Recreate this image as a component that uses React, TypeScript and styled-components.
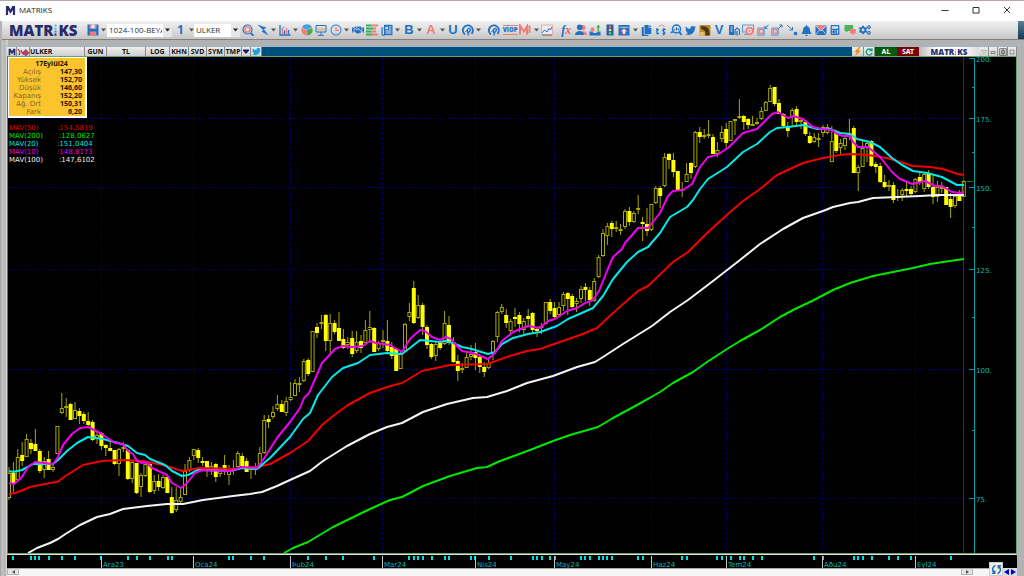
import React from "react";
import styled, { createGlobalStyle } from "styled-components";
import {
  FaHandshake,
  FaTwitter,
  FaBell,
  FaCalculator,
  FaCogs,
  FaCopy,
} from "react-icons/fa";

const BLUE = "#2272c4";
const RED = "#f07c7c";
const NAVY = "#2a2b6c";
const TEAL = "#00a0a0";
const TEAL_TEXT = "#00bcbc";

const GlobalStyle = createGlobalStyle`
  *, *::before, *::after { box-sizing: border-box; }
  body { margin: 0; background: #b4b4b4; font-family: "Open Sans", "Noto Sans", sans-serif; }
  button, select { font: inherit; color: inherit; margin: 0; padding: 0; border: 0; background: none; border-radius: 0; }
`;

/* ---------- chart data ---------- */

type Candle = [high: number, low: number, top: number, bottom: number, filled: 0 | 1];

const CANDLES: Candle[] = [
  [467, 500, 473, 498, 0], [462, 492, 473, 483, 1], [449, 482, 457, 480, 0], [442, 466, 455, 461, 1],
  [434, 457, 439, 457, 0], [439, 454, 443, 449, 1], [429, 451, 444, 451, 1], [449, 473, 451, 471, 1],
  [457, 478, 461, 470, 0], [451, 470, 459, 470, 1], [463, 472, 467, 470, 0], [426, 454, 426, 454, 0],
  [393, 414, 408, 413, 0], [398, 417, 406, 408, 0], [403, 420, 404, 420, 1], [402, 419, 410, 419, 0],
  [408, 424, 411, 416, 1], [412, 424, 414, 421, 1], [412, 427, 421, 425, 1], [420, 441, 422, 440, 1],
  [432, 444, 435, 439, 0], [432, 450, 433, 446, 1], [444, 456, 445, 448, 1], [442, 451, 448, 451, 1],
  [450, 465, 450, 464, 1], [448, 476, 449, 464, 0], [442, 452, 447, 449, 0], [449, 480, 450, 479, 1],
  [460, 483, 462, 479, 0], [463, 494, 463, 493, 1], [473, 497, 475, 487, 0], [462, 477, 464, 476, 0],
  [463, 493, 464, 492, 1], [475, 494, 481, 491, 0], [474, 491, 481, 487, 1], [475, 489, 477, 488, 0],
  [475, 493, 477, 493, 1], [487, 514, 497, 513, 1], [487, 512, 500, 510, 0], [488, 504, 497, 502, 0],
  [464, 495, 471, 495, 0], [457, 472, 460, 471, 0], [449, 460, 449, 456, 0], [448, 463, 450, 458, 1],
  [457, 466, 461, 463, 1], [461, 477, 461, 470, 1], [462, 475, 466, 470, 0], [463, 482, 464, 477, 1],
  [467, 477, 468, 474, 0], [455, 475, 465, 471, 1], [465, 485, 471, 475, 0], [460, 475, 468, 471, 0],
  [451, 467, 453, 467, 0], [453, 467, 456, 466, 1], [458, 472, 461, 472, 1], [466, 479, 468, 470, 0],
  [463, 475, 467, 470, 0], [447, 468, 453, 467, 0], [415, 454, 420, 453, 0], [415, 428, 419, 422, 1],
  [406, 419, 412, 417, 0], [395, 411, 404, 409, 0], [400, 412, 404, 412, 1], [397, 416, 401, 413, 0],
  [382, 401, 397, 400, 0], [379, 396, 383, 396, 0], [377, 392, 383, 385, 0], [359, 382, 361, 381, 0],
  [358, 376, 360, 374, 1], [331, 372, 331, 372, 0], [323, 338, 327, 333, 1], [315, 329, 322, 324, 0],
  [314, 351, 315, 341, 1], [314, 353, 323, 341, 0], [320, 334, 323, 332, 1], [312, 341, 328, 341, 1],
  [329, 349, 339, 348, 1], [337, 349, 342, 345, 0], [331, 357, 338, 354, 1], [331, 353, 342, 351, 0],
  [335, 353, 341, 348, 1], [320, 345, 330, 343, 0], [311, 343, 327, 330, 0], [327, 352, 328, 352, 1],
  [341, 351, 343, 349, 0], [330, 348, 340, 342, 0], [320, 352, 341, 351, 1], [342, 359, 347, 356, 1],
  [348, 371, 349, 371, 1], [352, 369, 354, 369, 0], [323, 351, 324, 351, 0], [303, 321, 312, 317, 0],
  [281, 324, 288, 323, 1], [295, 319, 305, 318, 0], [303, 335, 305, 327, 1], [325, 349, 327, 345, 1],
  [343, 359, 344, 357, 1], [342, 361, 344, 356, 0], [341, 350, 343, 348, 1], [311, 345, 323, 344, 0],
  [316, 345, 325, 343, 1], [337, 363, 342, 362, 1], [355, 381, 361, 371, 1], [363, 373, 368, 369, 0],
  [353, 368, 357, 368, 0], [345, 360, 354, 357, 0], [343, 370, 352, 358, 1], [354, 373, 357, 367, 1],
  [362, 377, 367, 372, 1], [358, 369, 363, 368, 0], [340, 360, 341, 354, 0], [311, 342, 312, 337, 0],
  [304, 314, 307, 312, 0], [309, 328, 315, 323, 1], [319, 334, 321, 331, 0], [308, 327, 317, 319, 1],
  [312, 332, 315, 324, 1], [318, 334, 321, 330, 0], [309, 327, 316, 319, 1], [312, 333, 313, 330, 1],
  [327, 337, 329, 331, 1], [323, 334, 326, 328, 0], [302, 324, 302, 324, 0], [299, 314, 302, 311, 1],
  [302, 318, 308, 317, 1], [302, 316, 307, 315, 0], [292, 311, 294, 306, 0], [292, 315, 293, 299, 1],
  [294, 308, 296, 307, 1], [298, 312, 301, 304, 0], [286, 303, 289, 299, 0], [283, 301, 287, 290, 1],
  [287, 306, 290, 300, 1], [278, 302, 281, 301, 0], [255, 278, 257, 277, 0], [229, 257, 233, 256, 0],
  [223, 245, 226, 236, 0], [221, 237, 223, 229, 1], [221, 232, 227, 229, 0], [224, 235, 229, 230, 0],
  [209, 229, 211, 227, 0], [207, 226, 211, 222, 1], [211, 223, 213, 222, 0], [195, 214, 208, 209, 0],
  [217, 241, 222, 224, 1], [208, 236, 224, 231, 1], [204, 231, 204, 230, 0], [186, 204, 188, 203, 0],
  [186, 208, 188, 196, 1], [153, 187, 157, 186, 0], [153, 169, 154, 160, 1], [153, 177, 160, 172, 1],
  [171, 190, 171, 190, 1], [182, 197, 189, 191, 0], [163, 182, 174, 182, 0], [162, 179, 163, 173, 1],
  [131, 168, 132, 167, 0], [127, 143, 132, 137, 1], [129, 139, 135, 137, 0], [120, 138, 134, 135, 0],
  [134, 154, 137, 154, 1], [142, 157, 150, 154, 0], [126, 142, 132, 139, 0], [123, 148, 129, 143, 1],
  [121, 141, 121, 141, 0], [119, 135, 119, 121, 0], [99, 119, 116, 118, 0], [115, 130, 116, 122, 1],
  [118, 129, 119, 125, 1], [116, 126, 124, 125, 0], [118, 125, 122, 124, 0], [107, 120, 111, 119, 0],
  [101, 111, 102, 111, 0], [85, 102, 88, 102, 0], [87, 106, 87, 104, 1], [99, 114, 103, 114, 1],
  [113, 127, 114, 126, 1], [122, 137, 126, 131, 1], [108, 127, 110, 117, 0], [106, 127, 109, 122, 1],
  [118, 129, 120, 122, 0], [120, 136, 122, 134, 1], [132, 144, 136, 143, 1], [133, 143, 137, 142, 0],
  [133, 147, 138, 139, 0], [125, 137, 127, 133, 0], [124, 134, 127, 133, 0], [126, 162, 141, 162, 0],
  [130, 153, 132, 151, 1], [139, 155, 143, 148, 0], [136, 150, 138, 146, 0], [119, 140, 133, 137, 0],
  [126, 173, 128, 173, 1], [165, 191, 167, 173, 0], [140, 167, 148, 167, 0], [141, 162, 143, 148, 0],
  [140, 167, 141, 166, 1], [162, 173, 164, 167, 1], [163, 183, 166, 182, 1], [175, 188, 182, 187, 1],
  [180, 191, 185, 186, 0], [182, 203, 185, 200, 1], [189, 201, 196, 197, 0], [188, 201, 190, 195, 0],
  [182, 196, 189, 191, 1], [186, 196, 189, 194, 1], [178, 193, 179, 192, 0], [172, 185, 177, 182, 1],
  [173, 192, 174, 189, 0], [170, 189, 173, 187, 1], [175, 204, 187, 197, 1], [181, 202, 187, 197, 0],
  [182, 193, 187, 188, 0], [187, 205, 187, 205, 1], [193, 218, 199, 207, 1], [194, 208, 196, 206, 0],
  [190, 201, 194, 201, 1], [180, 197, 181, 197, 0],
];

const AVERAGES = [
  {
    color: "#00e800",
    points:
      "284,553 293,548 308,542 333,527 370,509 390,500 402,497 423,486 450,476 477,468 487,467 500,461 530,450 553,441 570,435 598,427 613,418 637,405 660,392 673,383 693,372 707,362 727,349 740,341 760,330 780,317 795,309 812,301 833,290 850,283 873,276 893,272 913,268 930,264 950,261 964,259",
  },
  {
    color: "#f4f4f4",
    points:
      "28,553 37,548 50,543 58,539 67,533 80,525 97,517 110,514 123,509 147,506 167,504 183,504 203,500 233,496 250,494 262,492 277,486 290,480 310,471 323,461 347,446 370,434 387,427 402,423 423,412 447,404 473,398 487,397 507,391 527,383 553,376 577,367 595,362 603,357 623,344 652,326 670,312 688,300 713,281 740,260 760,244 783,229 803,218 823,211 833,207 850,203 858,202 873,198 897,197 920,196 937,195 964,195",
  },
  {
    color: "#f00000",
    points:
      "9,494 15,493 23,490 30,487 50,483 57,482 67,475 83,465 102,461 123,460 143,461 163,465 182,471 200,468 233,469 257,467 270,464 290,453 308,441 323,424 337,413 348,405 370,393 387,387 402,383 422,371 450,365 487,364 510,356 527,351 540,349 557,343 580,335 597,328 613,313 638,291 648,286 673,262 688,252 707,233 728,214 743,201 760,189 777,175 790,169 803,163 823,158 840,155 850,154 868,155 887,158 897,161 913,166 930,167 943,169 958,174 964,175",
  },
  {
    color: "#00eaea",
    points:
      "9,471 13,472 22,470 33,464 53,464 58,460 67,451 77,443 88,437 103,439 118,443 128,446 137,453 145,455 150,459 165,465 172,471 182,476 188,475 198,470 230,471 242,468 257,469 270,458 290,437 303,419 310,413 318,395 332,377 343,368 358,363 370,355 387,353 402,354 410,348 420,340 440,342 445,341 453,343 462,347 472,349 478,351 488,354 495,352 502,344 513,338 528,334 540,332 557,326 568,319 593,308 603,296 613,279 627,262 638,252 648,247 660,233 670,217 687,207 693,200 700,189 708,179 727,167 743,152 757,144 770,132 777,128 788,127 803,125 817,129 830,129 840,133 850,134 857,139 870,142 880,147 892,158 902,165 913,171 927,173 942,177 957,185 964,185",
  },
  {
    color: "#f000f0",
    points:
      "9,483 14,484 22,477 28,467 35,462 53,464 58,457 63,445 72,434 80,428 88,427 100,433 115,443 123,444 128,451 133,454 137,461 142,463 146,462 152,468 167,475 172,483 181,488 187,483 195,473 202,470 230,471 242,467 257,468 263,460 277,438 290,422 300,408 304,398 309,393 322,363 335,349 343,346 352,347 363,346 370,341 376,343 390,345 402,352 410,339 420,330 425,331 432,337 440,340 446,337 451,339 455,344 462,351 473,353 488,359 495,353 502,341 513,332 528,326 540,328 548,321 555,319 567,311 577,308 585,303 593,300 599,291 607,271 613,257 622,249 625,243 638,228 648,228 660,213 668,196 673,191 683,190 692,184 700,167 708,157 717,155 728,148 743,133 757,129 772,114 778,112 788,118 793,116 803,119 813,127 822,129 832,130 837,134 843,136 850,136 853,142 858,147 868,147 880,157 892,172 900,179 912,184 925,181 935,186 942,186 952,192 960,193 964,192",
  },
];

const PRICES = [
  { y: 59, label: "200." }, { y: 119, label: "175." }, { y: 188, label: "150." },
  { y: 270, label: "125." }, { y: 370, label: "100." }, { y: 499, label: "75." },
];
const MINOR_PRICES = [87, 152, 227, 317, 430];

const MONTHS = [
  { x: 102, label: "Ara23" }, { x: 194, label: "Oca24" }, { x: 291, label: "Þub24" },
  { x: 383, label: "Mar24" }, { x: 476, label: "Nis24" }, { x: 555, label: "May24" },
  { x: 652, label: "Haz24" }, { x: 727, label: "Tem24" }, { x: 823, label: "Aðu24" },
  { x: 916, label: "Eyl24" },
];

const TICKS = [
  13, 31, 35, 39, 49, 62, 75, 101, 128, 137, 150, 168, 172, 229, 233, 251, 264, 308, 326, 343, 374,
  409, 414, 418, 423, 432, 445, 449, 471, 475, 489, 511, 533, 537, 542, 550, 555, 581, 585, 590, 599,
  603, 607, 612, 638, 643, 682, 687, 717, 722, 731, 740, 744, 753, 762, 814, 823, 854, 858, 863, 872,
  889, 898, 911, 951,
];

/* ---------- page frame ---------- */

const Window = styled.div`
  display: flex;
  flex-direction: column;
  min-height: 100vh;
  border-top: 1px solid #b5a8a6;
  overflow: hidden;
`;

const TitleBar = styled.header`
  display: flex;
  align-items: center;
  height: 20px;
  padding: 0 12px 2px 5px;
  gap: 3px;
  background: #fff;
  color: #222;
`;

const WindowTitle = styled.h1`
  flex: 1;
  margin: 0;
  font-size: 8px;
  line-height: 12px;
  font-weight: 400;
`;

const WindowButton = styled.button`
  display: grid;
  place-items: center;
  width: 11px;
  height: 16px;
  margin-left: 17px;
`;

const Toolbar = styled.div`
  display: flex;
  align-items: stretch;
  height: 19px;
  margin-left: 2px;
  background: linear-gradient(#f1f1f1, #d4d4d4 70%, #c6c6c6);
  border-bottom: 1px solid #808080;
`;

const ToolbarBody = styled.div`
  display: flex;
  flex: 1;
  align-items: center;
  padding-left: 7px;
`;

const ToolbarEnd = styled.div`
  width: 6px;
  background: linear-gradient(#5c7f99, #173a53);
`;

const Brand = styled.div<{ $small?: boolean }>`
  display: flex;
  align-items: center;
  width: ${(p) => (p.$small ? "60px" : "78px")};
  height: ${(p) => (p.$small ? "9px" : "18px")};
  justify-content: ${(p) => (p.$small ? "center" : "flex-start")};
  background: ${(p) => (p.$small ? "linear-gradient(90deg, #bbb, #fff 30%, #fff 70%, #ddd)" : "none")};
  color: ${NAVY};
  font-size: ${(p) => (p.$small ? "8px" : "15px")};
  line-height: 1;
  font-weight: 800;
`;

const Tool = styled.button<{ $wide?: boolean }>`
  display: grid;
  place-items: center;
  flex: none;
  width: ${(p) => (p.$wide ? "14px" : "12px")};
  height: 14px;
  color: ${BLUE};
`;

const CaretButton = styled.button`
  display: grid;
  place-items: center;
  flex: none;
  width: 5px;
  height: 12px;
  color: #555;
`;

const Spacer = styled.span`
  width: 2px;
`;

const LetterTool = styled(Tool)<{ $tone: string }>`
  color: ${(p) => p.$tone};
  font-family: "Liberation Sans", sans-serif;
  font-size: 13px;
  line-height: 14px;
  font-weight: 700;
`;

const FormulaTool = styled(LetterTool)`
  display: flex;
  align-items: center;
  justify-content: center;
  font-family: "Liberation Serif", serif;
  font-style: italic;
  font-size: 12px;
  span { color: #d66; }
`;

const TinyTool = styled(Tool)`
  font-size: 6px;
  line-height: 8px;
  font-weight: 800;
  span { border-top: 1px solid ${RED}; border-bottom: 1px solid ${RED}; }
`;

const SaveTools = styled.div`
  display: flex;
  align-items: center;
  gap: 2px;
  width: 20px;
`;

const Picker = styled.label<{ $width: number }>`
  position: relative;
  display: flex;
  width: ${(p) => p.$width}px;
  height: 13px;
  background: #fff;
  color: #333;
  font-size: 8px;
  select {
    appearance: none;
    width: 100%;
    height: 12px;
    padding: 0 10px 0 2px;
    line-height: 12px;
    outline: none;
  }
`;

const PickerArrow = styled.span`
  position: absolute;
  right: 0;
  top: 0;
  display: grid;
  place-items: center;
  width: 9px;
  height: 13px;
  background: #e6e6e6;
  pointer-events: none;
`;

const PageTool = styled(LetterTool)`
  width: 17px;
  font-family: "Open Sans", sans-serif;
  font-size: 12px;
`;

const ToolStrip = styled.div`
  display: flex;
  flex: 0 1 629px;
  align-items: center;
  justify-content: space-between;
  margin-left: 2px;
`;

/* ---------- chart panel ---------- */

const Workspace = styled.main`
  display: flex;
  flex: 1;
  padding: 6px 7px 0 7px;
  background: linear-gradient(90deg, #9a9a9a, #c6c6c6 2px, #b2b2b2 5px, #dcdcdc 7px, #b2b2b2 8px);
`;

const Panel = styled.section`
  flex: 1;
  min-width: 0;
  display: flex;
  flex-direction: column;
`;

const PanelHeader = styled.div`
  display: flex;
  align-items: center;
  height: 10px;
  background: #00507e;
  border-top: 1px solid #9db6c6;
`;

const HeaderCell = styled.button<{ $width: number; $align?: string }>`
  display: flex;
  align-items: center;
  justify-content: ${(p) => p.$align ?? "center"};
  width: ${(p) => p.$width}px;
  height: 9px;
  background: linear-gradient(#eee, #cfcfcf);
  border-right: 1px solid #8a8a8a;
  color: #151515;
  font-family: "Noto Sans", sans-serif;
  font-size: 7px;
  line-height: 9px;
  font-weight: 700;
`;

const HeaderFill = styled.div`
  flex: 1;
`;

const TradeButton = styled(HeaderCell)<{ $tone: string }>`
  background: ${(p) => p.$tone};
  border: 0;
  color: #fff;
`;

const ChartArea = styled.div`
  position: relative;
  background: #000;
  border: 1px solid #67a567;
  border-left-color: #3c8f3c;
  svg { display: block; width: 100%; height: auto; }
`;

const TimeAxis = styled.div`
  background: #000;
  border-top: 1px solid #d6ded6;
  border-bottom: 1px solid #aaa;
  svg { display: block; width: 100%; height: auto; }
`;

const DataBox = styled.div`
  position: absolute;
  left: 0;
  top: 0;
  width: 79px;
  padding: 1px 3px 0 4px;
  background: #fcc42c;
  border: 1px solid #fff;
  border-bottom-width: 2px;
  border-right-width: 2px;
  color: #1c1400;
  font: 700 7px/8px "Noto Sans", sans-serif;
  table { width: 100%; border-collapse: collapse; }
  caption { padding: 1px 0 0 8px; }
  td, th { padding: 0; height: 8px; line-height: 8px; text-align: right; }
  th { width: 28px; color: #806520; font: 400 7px/8px "DejaVu Sans", sans-serif; }
`;

const Legend = styled.dl`
  position: absolute;
  left: 1px;
  top: 67px;
  margin: 0;
  font: 400 7px/8px "DejaVu Sans", sans-serif;
`;

const LegendRow = styled.div<{ $tone: string; $wide?: boolean }>`
  display: grid;
  grid-template-columns: ${(p) => (p.$wide ? "50px" : "48px")} auto;
  color: ${(p) => p.$tone};
  dd { margin: 0; }
`;

const ScrollRow = styled.div`
  position: relative;
  display: flex;
  align-items: stretch;
  justify-content: space-between;
  height: 7px;
  background: #f6f6f6;
`;

const ScrollButton = styled.button`
  display: grid;
  place-items: center;
  width: 12px;
  height: 6px;
  background: #e6e6e6;
  border: 1px solid #b5b5b5;
  border-top-color: #ddd;
`;

const ScrollTail = styled.div`
  display: flex;
  width: 56px;
  background: #f6f6f6;
`;

const PageControls = styled.div`
  position: absolute;
  right: 0;
  bottom: 0;
  display: flex;
  align-items: flex-end;
`;

const RefreshButton = styled.button`
  display: grid;
  place-items: center;
  width: 14px;
  height: 14px;
  background: #eee;
  border: 1px solid #ccc;
`;

const StepButton = styled.button`
  display: grid;
  place-items: center;
  width: 7px;
  height: 8px;
  background: #ddd;
`;

/* ---------- icons ---------- */

const Svg = ({ children, size = 12, box = "0 0 12 12" }: { children: React.ReactNode; size?: number; box?: string }) => (
  <svg width={size} height={size} viewBox={box} fill="none" aria-hidden="true">{children}</svg>
);

const Caret = ({ label }: { label: string }) => (
  <CaretButton aria-label={label}>
    <svg width="5" height="4" viewBox="0 0 5 4"><path d="M0 0.5h5L2.5 3.5z" fill="currentColor" /></svg>
  </CaretButton>
);

const DownMark = () => (
  <svg width="5" height="4" viewBox="0 0 5 4"><path d="M0 0.5h5L2.5 3.5z" fill="#222" /></svg>
);

const MLogo = ({ size, tone = NAVY }: { size: number; tone?: string }) => (
  <Svg size={size}><path d="M1 11V1h3l2 4 2-4h3v10H8.6V5.5L6 9.5 3.4 5.500V11z" fill={tone} /></Svg>
);

const Logo = ({ small }: { small?: boolean }) => (
  <Brand $small={small} role="img" aria-label="MATRIKS">
    <span>MATR</span>
    <svg width={small ? 3 : 5} height={small ? 6 : 12} viewBox="0 0 5 12" aria-hidden="true">
      <path d="M1.500 .5h2v2h-2z" fill="#55b8e8" />
      <path d="M1.500 3.800h2v1.800h-2z" fill="#55b8e8" />
      <path d="M1.500 6.700h2v1.800h-2z" fill="#2f7fc0" />
      <path d="M1.500 9.500h2v2.200h-2z" fill={NAVY} />
    </svg>
    <span>KS</span>
  </Brand>
);

const Magnifier = () => (
  <Svg>
    <circle cx="5.500" cy="5.500" r="4.500" stroke={BLUE} strokeWidth="1.200" />
    <circle cx="5.500" cy="5.500" r="2.600" stroke={RED} strokeWidth="1.400" />
    <path d="M8.800 9l2.700 2.700" stroke={BLUE} strokeWidth="1.800" />
  </Svg>
);

const SymbolSearch = () => (
  <Svg>
    <circle cx="6.500" cy="5" r="4" stroke={BLUE} strokeWidth="1.500" />
    <path d="M4.800 6.500V4.800M6.500 6.500V3M8.200 6.500V4" stroke={BLUE} />
    <path d="M9.300 8l2.200 3" stroke={BLUE} strokeWidth="2" />
    <path d="M.5 8.500L3.500 8" stroke={BLUE} strokeWidth="1.300" />
  </Svg>
);

const Bolt = ({ tone = BLUE }: { tone?: string }) => (
  <Svg>
    <path d="M1 1l8 2.800-2.300 1.500L11 11 4.800 7.400l1.800-1.200z" fill={tone} stroke={tone} strokeWidth="0.400" />
  </Svg>
);

const BarChart = () => (
  <Svg>
    <path d="M1 1v10h10.500" stroke={BLUE} strokeWidth="1.300" />
    <path d="M3.500 10V5M7.500 10V4" stroke={RED} strokeWidth="1.300" />
    <path d="M5.500 10V6.500M9.500 10V6" stroke={BLUE} strokeWidth="1.300" />
    <path d="M2.500 5l3-2" stroke={BLUE} strokeWidth="0.700" />
  </Svg>
);

const Pie = () => (
  <Svg>
    <path d="M6 6L1 3.500A5.500 5.500 0 0 1 11 3.500z" fill="#4a9fe0" />
    <path d="M6 6.300L11.200 4A5.500 5.500 0 0 1 6.300 11.600z" fill="#3fae49" />
    <path d="M5.700 6.300V11.600A5.500 5.500 0 0 1 .8 4z" fill={RED} />
  </Svg>
);

const Board = () => (
  <Svg>
    <path d="M1 1.500h10v6.500H1zM3 11.300h6M6 8v3" stroke={BLUE} />
    <path d="M3 6.500v-3M5 6.500v-2.500M7 6.500v-3M9 6.500v-2.500" stroke="#f0a040" />
  </Svg>
);

const Clock = () => (
  <Svg>
    <circle cx="6" cy="6" r="5" stroke="#5b9bd8" strokeWidth="1.300" />
    <path d="M6 3v3.300h3" stroke={RED} strokeWidth="1.200" />
  </Svg>
);

const DepthBars = () => (
  <Svg>
    <path d="M0 1.500h5M0 4.500h7M0 7.500h5M0 10.500h6" stroke="#35ad5b" strokeWidth="2" />
    <path d="M5 1.500h7M7 4.500h3M5 7.500h5M6 10.500h6" stroke={RED} strokeWidth="2" />
  </Svg>
);

const Newspaper = () => (
  <Svg>
    <path d="M3 .8h8.500v10.400H3z" fill={BLUE} />
    <path d="M2.500 4H1v6.500l.7.700h2" stroke={BLUE} strokeWidth="1.200" />
    <path d="M4.500 2.800h2.500v2.400H4.500z" fill="#e6e6e6" />
    <path d="M8 3h2.300M8 5h2.300M4.500 7h5.800M4.500 9h5.800" stroke="#e6e6e6" />
  </Svg>
);

const Horse = () => (
  <Svg>
    <path d="M3 10.500A5 5 0 1 1 9.500 9.800" stroke={BLUE} strokeWidth="1.800" />
    <path d="M6 11.500C7 9 4.500 8 5.500 5.500 6.200 3.800 8 4 8.500 5.500L8 7c-1 0-1.500 1-1 2.500" stroke={BLUE} strokeWidth="1.300" />
    <path d="M3.500 8L5 6" stroke={BLUE} />
  </Svg>
);

const RedM = () => (
  <Svg><path d="M1 10.500V1.500L5 7.500l3-5V10.500M10.500 9V1.500" stroke={RED} strokeWidth="2" /></Svg>
);

const LineChartIcon = () => (
  <Svg>
    <path d="M.5 1h11v10H.5z" fill="#ececec" stroke="#f3a6a6" />
    <path d="M1 9l2.500-3L6 8l2-3.500L9.500 6 11 3" stroke={BLUE} />
    <path d="M1 11h10" stroke="#666" />
  </Svg>
);

const Users = () => (
  <Svg>
    <circle cx="8" cy="3.500" r="2.500" fill={RED} /><path d="M4.500 11c0-5 7.500-5 7.500 0z" fill={RED} />
    <circle cx="4.700" cy="3.300" r="2.800" fill={BLUE} /><path d="M0 11c0-5.500 9-5.500 9 0z" fill={BLUE} />
  </Svg>
);

const Inbox = () => (
  <Svg>
    <path d="M.5 7.500h3l1 1.500h3l1-1.500h3v4H.5z" fill={BLUE} />
    <path d="M2 3.500h3v2h1.500L3.800 8 1 5.500h1z" fill={RED} />
    <path d="M8.500 7V3.500H7L9.300 .5 11.600 3.500H10V7z" fill="#49b35c" />
  </Svg>
);

const TrafficLight = () => (
  <Svg>
    <rect x="2.500" y=".5" width="7" height="11" fill="#255f9e" />
    <circle cx="6" cy="2.700" r="1.300" fill="#ff6257" />
    <circle cx="6" cy="6" r="1.300" fill="#ffe34d" />
    <circle cx="6" cy="9.300" r="1.300" fill="#53d668" />
  </Svg>
);

const UploadWindow = () => (
  <Svg>
    <rect x=".5" y="1" width="11" height="10.500" fill={BLUE} />
    <path d="M1.500 3.300h9" stroke="#dfeaf5" strokeWidth="0.800" />
    <path d="M6 4.500L9 7.500H7.300V10H4.700V7.500H3z" fill="#fff" stroke={RED} strokeWidth="0.800" />
  </Svg>
);

const Exchange = () => (
  <Svg>
    <path d="M2 4V9.500h2M1 5.800h3" stroke={BLUE} strokeWidth="1.300" />
    <path d="M10.800 5.500C8.500 4.500 6.500 6 8.500 7.500S11 10 7 9.800M8.800 4v7.500" stroke={BLUE} strokeWidth="1.100" />
    <path d="M4 2.500C6 .5 8.500 1 9.500 3" stroke={RED} />
  </Svg>
);

const DepositIcon = () => (
  <Svg>
    <rect x=".5" y="1" width="11" height="10.500" fill="#b98a32" />
    <path d="M2 2.500C9 1.500 11 6 10.500 11.500H6C7.500 8 5.500 5.500 2 5z" fill="#4a3610" />
    <path d="M.5 8h5v3.500h-5z" fill="#e4bc62" />
  </Svg>
);

const Tower = () => (
  <Svg>
    <path d="M1 11V1h5v10z" fill={BLUE} /><path d="M2.500 3h2M2.500 5h2M2.500 7h2" stroke="#fff" strokeWidth=".8" />
    <path d="M7 11V6l2-2 2.500 2v5" stroke={BLUE} strokeWidth="1.200" /><path d="M9 7v4.500" stroke={BLUE} strokeWidth="1.300" />
  </Svg>
);

const ScreenTarget = () => (
  <Svg>
    <path d="M.5 1h11v7H.5zM2 10.500h4" stroke="#5b9bd8" strokeWidth="1.100" />
    <circle cx="7.500" cy="7" r="3.300" fill="#dedede" stroke={RED} strokeWidth="1.700" />
    <circle cx="7.500" cy="7" r="1" fill={RED} />
  </Svg>
);

const BoxArrow = ({ out }: { out?: boolean }) => (
  <Svg>
    <path d="M.8 4h6.500v7.200H.8z" stroke="#5b9bd8" />
    <path d="M2.300 5.500h4v4h-4z" stroke={RED} strokeWidth="1.300" />
    <path d={out ? "M7.500 4.500L11 1M8.500 1H11v2.500" : "M11.500 .8L8 4.300M8 1.800v2.500h2.500"} stroke={BLUE} />
  </Svg>
);

const Trend = () => (
  <Svg>
    <path d="M1 1l5.500 5M6.500 3v3H3.500" stroke={BLUE} strokeWidth=".9" />
    <circle cx="9.500" cy="9.500" r="1.800" fill={BLUE} />
  </Svg>
);

const Mail = () => (
  <Svg>
    <path d="M.5 1.500h11v9.500H.5z" fill={BLUE} /><path d="M.5 1.500h11L6 7z" fill={RED} />
    <path d="M.5 1.500L6 7l5.500-5.500M.5 11l4-5M11.500 11l-4-5" stroke="#eee" strokeWidth=".7" />
  </Svg>
);

const Chat = () => (
  <Svg>
    <path d="M.5 1h8.500v6H4L2 8.500V7H.5z" fill="#45b65a" />
    <path d="M6 5h5.700v4.500h-1.500L9 11.500 8 9.500H6z" fill={RED} />
  </Svg>
);

const Floppy = () => (
  <Svg>
    <path d="M.5 .5h11v11H.5z" fill={BLUE} /><path d="M2.800 .5h6.400v4H2.800z" fill="#e9e9e9" />
    <path d="M3.500 .5v3.500M8.500 .5v3.500" stroke={RED} strokeWidth="1.600" /><path d="M2.800 7.500h6.400v4H2.800z" fill={RED} />
  </Svg>
);

/* ---------- chart ---------- */

const candleX = (index: number) => 9 + index * 4.4;

const PriceChart = () => (
  <svg viewBox="8 57 1008 496" role="img" aria-label="ULKER daily candles with moving averages">
    <g stroke="#000064" strokeDasharray="3 2">
      {MONTHS.map((m) => <path key={m.x} d={`M${m.x - 0.5} 57V553`} />)}
      {PRICES.map((p) => <path key={p.y} d={`M8 ${p.y - 0.5}H969`} />)}
    </g>
    <path d="M963.500 57V553" stroke="#780078" />
    {CANDLES.map(([high, low, top, bottom, filled], i) => {
      const x = candleX(i);
      return filled ? (
        <g key={i}>
          <path d={`M${x} ${high}V${low}`} stroke="#a8a800" />
          <rect x={x - 2} y={top} width="4" height={Math.max(2, bottom - top)} fill="#ffff00" />
        </g>
      ) : (
        <g key={i} stroke="#a8a800" fill="none">
          <path d={`M${x} ${high}V${top}M${x} ${bottom}V${low}`} />
          <rect x={x - 1.5} y={top + 0.5} width="3" height={Math.max(1, bottom - top - 1)} />
        </g>
      );
    })}
    {AVERAGES.map((line) => (
      <polyline key={line.color} points={line.points} fill="none" stroke={line.color} strokeWidth="2" strokeLinejoin="round" />
    ))}
    <path d="M965 181.500H973" stroke="#008000" />
    <path d="M974.500 58V553" stroke={TEAL} />
    {PRICES.map((p) => (
      <g key={p.y}>
        <path d={`M969 ${p.y - 0.5}H974`} stroke={TEAL} />
        <text x="976" y={p.y + 3} fill={TEAL_TEXT} fontFamily="DejaVu Sans, sans-serif" fontSize="7">{p.label}</text>
      </g>
    ))}
    {MINOR_PRICES.map((y) => <path key={y} d={`M972 ${y + 0.5}H974`} stroke={TEAL} />)}
  </svg>
);

const Months = () => (
  <svg viewBox="7 555 1010 13" role="img" aria-label="Months">
    {TICKS.map((x) => <rect key={x} x={x - 1} y="556" width="2" height="4" fill="#00e0e0" />)}
    {MONTHS.map((m) => (
      <g key={m.x}>
        <path d={`M${m.x - 0.5} 556V568`} stroke="#c8c8c8" />
        <text x={m.x + 1} y="567" fill={TEAL_TEXT} fontFamily="DejaVu Sans, sans-serif" fontSize="7">{m.label}</text>
      </g>
    ))}
  </svg>
);

const QUOTE = [
  ["Açılış", "147,30"], ["Yüksek", "152,70"], ["Düşük", "146,60"],
  ["Kapanış", "152,20"], ["Ağ. Ort", "150,31"], ["Fark", "6,20"],
];

const LEGEND = [
  { name: "MAV(50)", value: ":154,5819", tone: "#e00000" },
  { name: "MAV(200)", value: ":128,0627", tone: "#00e000", wide: true },
  { name: "MAV(20)", value: ":151,0404", tone: "#00e0e0" },
  { name: "MAV(10)", value: ":148,8173", tone: "#e000e0" },
  { name: "MAV(100)", value: ":147,6102", tone: "#f0f0f0", wide: true },
];

export default function App() {
  return (
    <>
      <GlobalStyle />
      <Window>
        <TitleBar>
          <MLogo size={11} />
          <WindowTitle>MATRIKS</WindowTitle>
          <WindowButton aria-label="Minimize">
            <svg width="8" height="8" viewBox="0 0 8 8"><path d="M0.500 4.500h7" stroke="#333" /></svg>
          </WindowButton>
          <WindowButton aria-label="Maximize">
            <svg width="8" height="8" viewBox="0 0 8 8"><path d="M1 1.500h6v5.500H1z" fill="none" stroke="#333" /></svg>
          </WindowButton>
          <WindowButton aria-label="Close">
            <svg width="8" height="8" viewBox="0 0 8 8"><path d="M1 1l6 6M7 1L1 7" stroke="#333" /></svg>
          </WindowButton>
        </TitleBar>

        <Toolbar>
          <ToolbarBody>
            <Logo />
            <SaveTools>
              <Tool aria-label="Save"><Floppy /></Tool>
              <Caret label="Save options" />
            </SaveTools>
            <Picker $width={65}>
              <select aria-label="Page layout"><option>1024-100-BEYAZ</option></select>
              <PickerArrow><DownMark /></PickerArrow>
            </Picker>
            <PageTool $tone={BLUE}>1</PageTool>
            <Caret label="Page list" />
            <Picker $width={46}>
              <select aria-label="Symbol"><option>ULKER</option></select>
              <PickerArrow><DownMark /></PickerArrow>
            </Picker>
            <ToolStrip>
              <Tool aria-label="Find"><Magnifier /></Tool>
              <Tool aria-label="Quick"><Bolt /></Tool>
              <Caret label="Quick options" />
              <Tool aria-label="Charts"><BarChart /></Tool>
              <Caret label="Chart options" />
              <Tool aria-label="Distribution"><Pie /></Tool>
              <Tool aria-label="Board"><Board /></Tool>
              <Tool aria-label="Time"><Clock /></Tool>
              <Caret label="Time options" />
              <Tool aria-label="Agreements"><FaHandshake size={12} /></Tool>
              <Tool aria-label="Depth"><DepthBars /></Tool>
              <Tool aria-label="News"><Newspaper /></Tool>
              <Caret label="News options" />
              <LetterTool $tone={BLUE}>B</LetterTool>
              <Caret label="B options" />
              <LetterTool $tone={RED}>A</LetterTool>
              <Caret label="A options" />
              <LetterTool $tone={BLUE}>U</LetterTool>
              <Tool aria-label="Exchange"><Horse /></Tool>
              <Caret label="Exchange options" />
              <Spacer />
              <Tool aria-label="Exchange orders"><Horse /></Tool>
              <TinyTool $wide><span>VİOP</span></TinyTool>
              <Tool aria-label="Matriks"><RedM /></Tool>
              <Caret label="Matriks options" />
              <Tool aria-label="Line chart"><LineChartIcon /></Tool>
              <Spacer />
              <FormulaTool $tone={BLUE}>f<span>x</span></FormulaTool>
              <Tool aria-label="Users"><Users /></Tool>
              <Tool aria-label="Transfers"><Inbox /></Tool>
              <Tool aria-label="Signals"><TrafficLight /></Tool>
              <Tool aria-label="Upload"><UploadWindow /></Tool>
              <Caret label="Upload options" />
              <Tool aria-label="Copy"><FaCopy size={11} /></Tool>
              <Tool aria-label="Currency"><Exchange /></Tool>
              <Tool aria-label="Search"><SymbolSearch /></Tool>
              <Tool aria-label="Twitter"><FaTwitter size={11} /></Tool>
              <Tool aria-label="Deposit"><DepositIcon /></Tool>
              <LetterTool $tone={BLUE}>V</LetterTool>
              <Tool aria-label="Companies"><Tower /></Tool>
              <Tool aria-label="Screen"><ScreenTarget /></Tool>
              <Tool aria-label="Import"><BoxArrow /></Tool>
              <Tool aria-label="Export"><BoxArrow out /></Tool>
              <Tool aria-label="Trend"><Trend /></Tool>
              <Tool aria-label="Alarm"><FaBell size={11} /></Tool>
              <Tool aria-label="Mail"><Mail /></Tool>
              <Tool aria-label="Calculator"><FaCalculator size={10} /></Tool>
              <Tool aria-label="Chat"><Chat /></Tool>
              <Tool aria-label="Settings"><FaCogs size={12} /></Tool>
            </ToolStrip>
          </ToolbarBody>
          <ToolbarEnd />
        </Toolbar>

        <Workspace>
          <Panel>
            <PanelHeader>
              <HeaderCell $width={10} aria-label="Menu"><MLogo size={8} /></HeaderCell>
              <HeaderCell $width={13} aria-label="Link">
                <svg width="12" height="8" viewBox="0 0 12 8" fill="none">
                  <path d="M1 1l2 3-1 3M4 2l2 4h2" stroke="#b22a4a" strokeWidth="1.200" />
                  <path d="M5.500 5l3.300-3.500 3 3.500L9 7.800z" fill="#d8345c" stroke="#2d3a86" strokeWidth=".7" />
                </svg>
              </HeaderCell>
              <HeaderCell $width={55} $align="flex-start">ULKER</HeaderCell>
              <HeaderCell $width={22}>GUN</HeaderCell>
              <HeaderCell $width={39}>TL</HeaderCell>
              <HeaderCell $width={24}>LOG</HeaderCell>
              <HeaderCell $width={19}>KHN</HeaderCell>
              <HeaderCell $width={18}>SVD</HeaderCell>
              <HeaderCell $width={18}>SYM</HeaderCell>
              <HeaderCell $width={17}>TMP</HeaderCell>
              <HeaderCell $width={9} aria-label="More">
                <svg width="6" height="5" viewBox="0 0 6 5"><path d="M0 .5h6v1L3.500 4.500h-1L0 1.500z" fill="#1a1a5c" /></svg>
              </HeaderCell>
              <HeaderCell $width={11} aria-label="Share"><FaTwitter size={9} color="#1da1e0" /></HeaderCell>
              <HeaderFill />
              <HeaderCell $width={12} aria-label="Fast order">
                <Svg size={9}><path d="M8 0L2 6.500h3L3 12 10.500 5H7L10 0z" fill="#f08c00" /></Svg>
              </HeaderCell>
              <HeaderCell $width={11} aria-label="Refresh">
                <Svg size={8}><path d="M10 3.500A4.500 4.500 0 1 0 10.500 7.500M10.500 .5v3.500H7" stroke="#14a08c" strokeWidth="2" /></Svg>
              </HeaderCell>
              <TradeButton $width={22} $tone="#055a0c">AL</TradeButton>
              <TradeButton $width={22} $tone="#7d0006">SAT</TradeButton>
              <Logo small />
              <HeaderCell $width={10} aria-label="Drop">
                <Svg size={6}><path d="M1 3h10L6 9z" stroke="#888" /></Svg>
              </HeaderCell>
              <HeaderCell $width={9} aria-label="Minimize panel">
                <Svg size={6}><path d="M2 5h8v4H2z" stroke="#666" strokeWidth="1.500" /></Svg>
              </HeaderCell>
              <HeaderCell $width={10} aria-label="Tile panel">
                <Svg size={8}><path d="M1 1h10v10H1zM3.500 4h5v4h-5zM6 1v10" stroke="#444" /></Svg>
              </HeaderCell>
              <HeaderCell $width={9} aria-label="Close panel">
                <Svg size={6}><path d="M2 2h8v8H2z" stroke="#777" strokeWidth="1.500" /></Svg>
              </HeaderCell>
            </PanelHeader>

            <ChartArea>
              <PriceChart />
              <DataBox>
                <table>
                  <caption>17Eylül24</caption>
                  <tbody>
                    {QUOTE.map(([name, value]) => (
                      <tr key={name}><th scope="row">{name}</th><td>{value}</td></tr>
                    ))}
                  </tbody>
                </table>
              </DataBox>
              <Legend>
                {LEGEND.map((row) => (
                  <LegendRow key={row.name} $tone={row.tone} $wide={row.wide}>
                    <dt>{row.name}</dt>
                    <dd>{row.value}</dd>
                  </LegendRow>
                ))}
              </Legend>
            </ChartArea>

            <TimeAxis><Months /></TimeAxis>

            <ScrollRow>
              <ScrollButton aria-label="Scroll left">
                <svg width="3" height="4" viewBox="0 0 3 4"><path d="M3 0v4L0 2z" fill="#555" /></svg>
              </ScrollButton>
              <ScrollTail>
                <ScrollButton aria-label="Scroll right">
                  <svg width="3" height="4" viewBox="0 0 3 4"><path d="M0 0v4l3-2z" fill="#555" /></svg>
                </ScrollButton>
              </ScrollTail>
              <PageControls>
                <RefreshButton aria-label="Reload chart">
                  <Svg size={11}><path d="M5 1.500C1.500 3 .5 7 3.500 9.500M1 10h3V7M7 10.500c3.500-1.500 4.500-5.500 1.500-8M11 2H8v3" stroke="#2a6db0" strokeWidth="1.700" /></Svg>
                </RefreshButton>
                <StepButton aria-label="Previous">
                  <svg width="5" height="6" viewBox="0 0 5 6"><path d="M5 0v6L0 3z" fill="#0000c8" /></svg>
                </StepButton>
                <StepButton aria-label="Next">
                  <svg width="5" height="6" viewBox="0 0 5 6"><path d="M0 0v6l5-3z" fill="#0000c8" /></svg>
                </StepButton>
              </PageControls>
            </ScrollRow>
          </Panel>
        </Workspace>
      </Window>
    </>
  );
}
